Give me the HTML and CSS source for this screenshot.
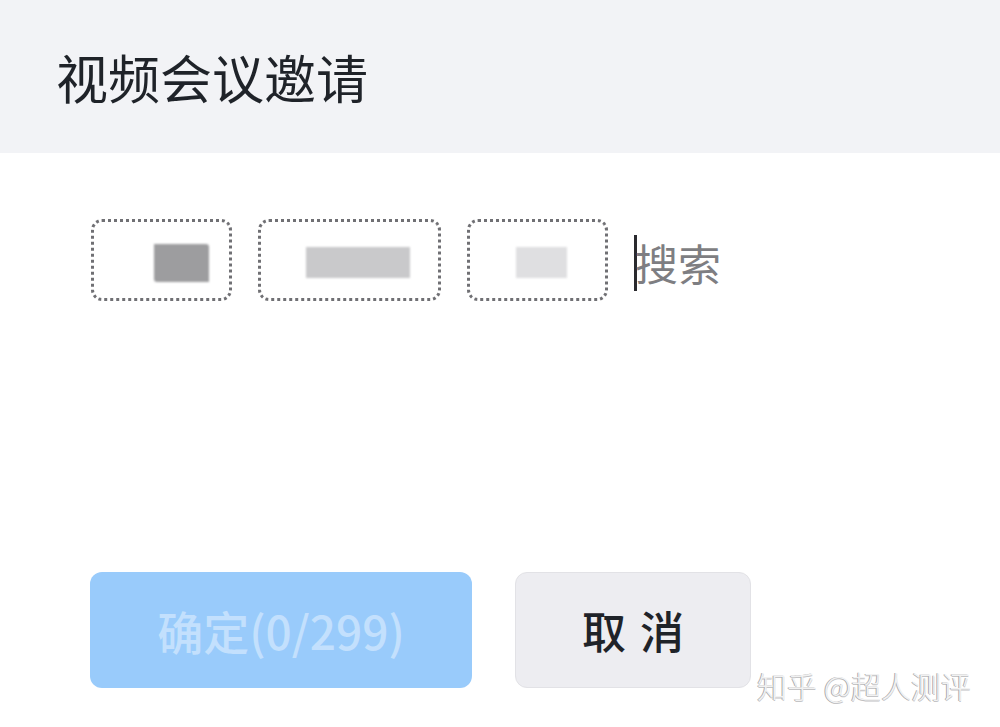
FILE: index.html
```html
<!DOCTYPE html>
<html lang="zh-CN">
<head>
  <meta charset="UTF-8" />
  <meta name="viewport" content="width=device-width, initial-scale=1.0" />
  <title>视频会议邀请</title>
  <link rel="stylesheet" href="styles.css">
</head>
<body>
  <div class="header">
    <h1 class="title">视频会议邀请</h1>
  </div>

  <div class="picker">
    <div class="chip chip-small"><span class="blur blur-dark"></span></div>
    <div class="chip chip-wide"><span class="blur blur-mid"></span></div>
    <div class="chip chip-small"><span class="blur blur-light"></span></div>
    <div class="search">
      <span class="caret"></span>
      <span class="search-hint">搜索</span>
    </div>
  </div>

  <div class="actions">
    <button class="btn btn-primary" disabled>确定(0/299)</button>
    <button class="btn btn-cancel">取消</button>
  </div>

  <div class="watermark">知乎 @超人测评</div>
</body>
</html>
```

FILE: styles.css
```css
body {
  margin: 0;
  padding: 0;
  font-family: "Noto Sans CJK SC", "Noto Sans", sans-serif;
  background: #ffffff;
  width: 1000px;
  height: 727px;
  overflow: hidden;
  position: relative;
}

.header {
  height: 153px;
  background: #f2f3f6;
  display: flex;
  align-items: center;
  padding-left: 56px;
}

.title {
  margin: 0;
  font-size: 52px;
  font-weight: 400;
  color: #1f2329;
  line-height: 1;
}

.picker {
  display: flex;
  align-items: center;
  gap: 26px;
  margin-top: 66px;
  padding-left: 91px;
}

.chip {
  height: 82px;
  box-sizing: border-box;
  border: 3px dotted #707074;
  border-radius: 11px;
  display: flex;
  align-items: center;
  justify-content: center;
}

.chip-small { width: 141px; }
.chip-wide { width: 183px; }

.blur {
  display: block;
  filter: blur(1px);
}

.blur-dark {
  width: 55px;
  height: 38px;
  background: #9d9d9f;
  margin-left: 40px;
  border-radius: 0 3px 0 3px;
  margin-top: 6px;
}

.blur-mid {
  width: 104px;
  height: 31px;
  background: #c9c9cb;
  margin-left: 16px;
  margin-top: 4px;
}

.blur-light {
  width: 51px;
  height: 31px;
  background: #dfdfe1;
  margin-left: 8px;
  margin-top: 4px;
}

.search {
  display: flex;
  align-items: center;
  margin-top: 5px;
}

.caret {
  width: 3px;
  height: 56px;
  background: #2a2a2e;
}

.search-hint {
  font-size: 43px;
  color: #7e7e82;
  line-height: 1;
  margin-left: -2px;
}

.actions {
  display: flex;
  gap: 43px;
  margin-top: 271px;
  padding-left: 90px;
}

.btn {
  height: 116px;
  border-radius: 12px;
  font-family: "Noto Sans CJK SC", "Noto Sans", sans-serif;
  line-height: 1;
  cursor: pointer;
  padding: 0;
}

.btn-primary {
  width: 382px;
  border: none;
  background: #99cbfb;
  color: #c3e0fd;
  font-size: 46px;
  font-weight: 500;
}

.btn-primary:disabled {
  cursor: default;
}

.btn-cancel {
  width: 236px;
  box-sizing: border-box;
  border: 1px solid #e2e2e6;
  background: #ededf1;
  color: #1f2329;
  font-size: 44px;
  font-weight: 500;
  letter-spacing: 14px;
  padding-left: 14px;
}

.watermark {
  position: absolute;
  left: 757px;
  top: 666px;
  font-size: 30px;
  font-weight: 300;
  line-height: 1.3;
  color: #f2f2f2;
  text-shadow: -1px 0 0 #a9a9ab, 0 1px 0 #c4c4c6;
  white-space: nowrap;
}
```
